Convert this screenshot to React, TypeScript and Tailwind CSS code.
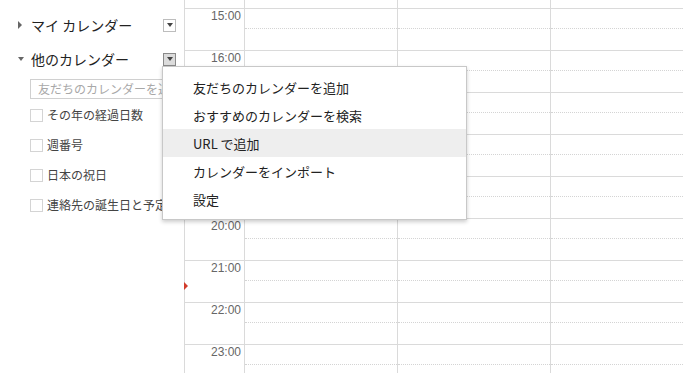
import React from "react";

const jp = { fontFamily: '"Noto Sans CJK JP", "Noto Sans", sans-serif' };
const hours = ["15:00", "16:00", "17:00", "18:00", "19:00", "20:00", "21:00", "22:00", "23:00"];
const calendars = ["その年の経過日数", "週番号", "日本の祝日", "連絡先の誕生日と予定"];
const menuItems = [
  "友だちのカレンダーを追加",
  "おすすめのカレンダーを検索",
  "URL で追加",
  "カレンダーをインポート",
  "設定",
];

const DropButton = ({ active }: { active?: boolean }) => (
  <div
    className={
      active
        ? "w-[13px] h-[13px] border border-[#8a8a8a] bg-[#dcdcdc] flex items-center justify-center"
        : "w-[13px] h-[13px] border border-[#bdbdbd] bg-white flex items-center justify-center"
    }
  >
    <div className="w-0 h-0 border-l-[3px] border-r-[3px] border-t-[4px] border-l-transparent border-r-transparent border-t-[#444]" />
  </div>
);

const Section = ({ label, open, active }: { label: string; open?: boolean; active?: boolean }) => (
  <div className="h-[34px] flex items-center pl-[18px] pr-[8px]">
    <div className="w-[13px] flex items-center">
      {open ? (
        <div className="w-0 h-0 border-l-[3px] border-r-[3px] border-t-[4px] border-l-transparent border-r-transparent border-t-[#666]" />
      ) : (
        <div className="w-0 h-0 border-t-[4px] border-b-[4px] border-l-[4px] border-t-transparent border-b-transparent border-l-[#666]" />
      )}
    </div>
    <span className="text-[14px] text-[#222] leading-none" style={jp}>
      {label}
    </span>
    <div className="ml-auto">
      <DropButton active={active} />
    </div>
  </div>
);

const DayCells = () => (
  <>
    {[0, 1, 2].map((d) => (
      <div key={d} className="w-[153px] shrink-0 border-r border-[#dadada]">
        <div className="h-[20px] border-b border-dotted border-[#d4d4d4]" />
      </div>
    ))}
  </>
);

export default function App() {
  return (
    <div className="relative w-[683px] h-[373px] overflow-hidden bg-white flex items-start">
      <div className="w-[184px] shrink-0 pt-[8px]">
        <Section label="マイ カレンダー" />
        <Section label="他のカレンダー" open active />
        <div className="ml-[30px] mt-[3px] h-[20px] w-[160px] border border-[#d0d0d0] flex items-center pl-[7px] overflow-hidden whitespace-nowrap">
          <span className="text-[12px] text-[#a8a8a8] leading-none" style={jp}>
            友だちのカレンダーを追加
          </span>
        </div>
        <div className="mt-[1px]">
          {calendars.map((c) => (
            <div key={c} className="h-[30px] flex items-center pl-[30px] whitespace-nowrap">
              <div className="w-[13px] h-[13px] border border-[#d4d4d4] bg-white shrink-0" />
              <span className="ml-[4px] text-[12px] text-[#444] leading-none" style={jp}>
                {c}
              </span>
            </div>
          ))}
        </div>
      </div>

      <div className="flex flex-col shrink-0 border-l border-[#dadada]">
        <div className="h-[8px] shrink-0 flex">
          <div className="w-[60px] shrink-0 border-r border-[#dadada]" />
          {[0, 1, 2].map((d) => (
            <div key={d} className="w-[153px] shrink-0 border-r border-[#dadada]" />
          ))}
        </div>
        {hours.map((h) => (
          <div key={h} className="h-[42px] shrink-0 flex border-t border-[#dadada]">
            <div
              className="w-[60px] shrink-0 border-r border-[#dadada] text-right pr-[3px] text-[12px] leading-[14px] text-[#666]"
              style={{ fontFamily: '"Liberation Sans", Arial, sans-serif' }}
            >
              {h}
            </div>
            <DayCells />
          </div>
        ))}
      </div>

      <div className="absolute left-[184px] top-[282px] w-0 h-0 border-t-[4px] border-b-[4px] border-l-[4px] border-t-transparent border-b-transparent border-l-[#d23c2c]" />

      <div className="absolute left-[162px] top-[66px] w-[305px] bg-white border border-[#c8c8c8] shadow-[0_2px_4px_rgba(0,0,0,0.2)] py-[6px]">
        {menuItems.map((m, i) => (
          <div
            key={m}
            className={
              i === 2
                ? "h-[28px] flex items-center pl-[30px] bg-[#eeeeee]"
                : "h-[28px] flex items-center pl-[30px]"
            }
          >
            <span className="text-[13px] text-[#222] leading-none" style={jp}>
              {m}
            </span>
          </div>
        ))}
      </div>
    </div>
  );
}
